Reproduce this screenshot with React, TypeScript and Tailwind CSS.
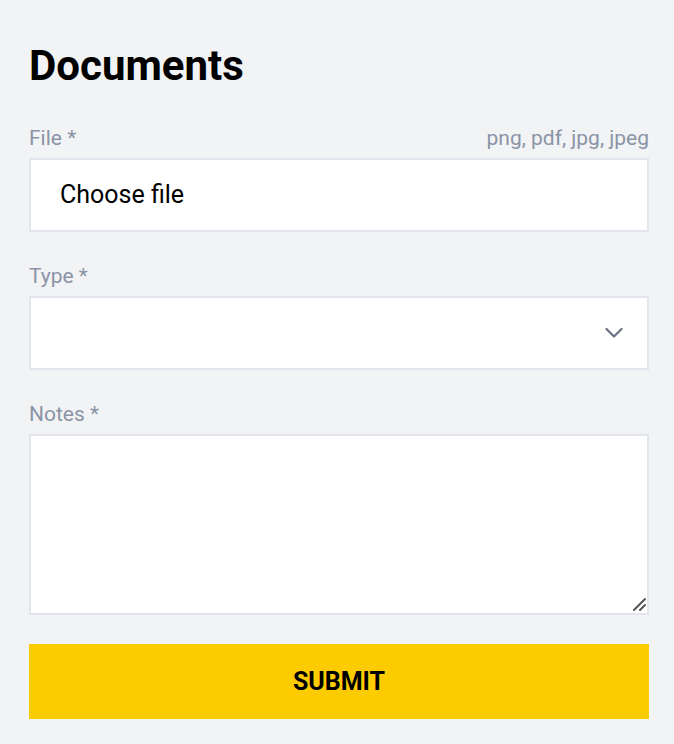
import { useState } from "react";

function Label({ text, hint }: { text: string; hint?: string }) {
  return (
    <div className="flex justify-between h-[26px] leading-[26px] text-[21px] text-[#8a94a6] mb-[7px]">
      <span>{text}</span>
      {hint && <span>{hint}</span>}
    </div>
  );
}

export default function App() {
  const [notes, setNotes] = useState("");

  return (
    <div
      className="min-h-screen bg-[#f2f3f5] pl-[29px] pr-[25px] pt-[44px] pb-[25px]"
      style={{ fontFamily: "Roboto, 'Liberation Sans', sans-serif" }}
    >
      <h1 className="text-[42px] leading-[44px] font-bold text-black mb-[37px]">
        Documents
      </h1>

      <div className="mb-[31px]">
        <Label text="File *" hint="png, pdf, jpg, jpeg" />
        <label className="flex items-center h-[74px] bg-white border-2 border-[#e2e5eb] pl-[29px] cursor-pointer">
          <span className="text-[25px] text-black">Choose file</span>
          <input type="file" className="hidden" accept=".png,.pdf,.jpg,.jpeg" />
        </label>
      </div>

      <div className="mb-[31px]">
        <Label text="Type *" />
        <div className="relative h-[74px] bg-white border-2 border-[#e2e5eb]">
          <select className="w-full h-full appearance-none bg-transparent outline-none px-[29px] text-[25px]">
            <option value=""></option>
            <option value="id">ID</option>
            <option value="invoice">Invoice</option>
          </select>
          <svg
            className="absolute right-[24px] top-1/2 -translate-y-1/2 pointer-events-none"
            width="18"
            height="11"
            viewBox="0 0 18 11"
            fill="none"
          >
            <path
              d="M1.5 1.5 9 9l7.5-7.5"
              stroke="#6b7280"
              strokeWidth="2.2"
              strokeLinecap="round"
              strokeLinejoin="round"
            />
          </svg>
        </div>
      </div>

      <div className="mb-[29px]">
        <Label text="Notes *" />
        <div className="relative">
          <textarea
            value={notes}
            onChange={(e) => setNotes(e.target.value)}
            className="block w-full h-[181px] bg-white border-2 border-[#e2e5eb] outline-none resize-none p-4 text-[22px]"
          />
          <svg
            className="absolute right-[3px] bottom-[4px] pointer-events-none"
            width="14"
            height="14"
            viewBox="0 0 14 14"
            fill="none"
          >
            <path d="M13 2 2 13M13 8l-5 5" stroke="#555" strokeWidth="2" strokeLinecap="round" />
          </svg>
        </div>
      </div>

      <button className="w-full h-[75px] bg-[#fdcc00] text-black font-bold text-[25px] uppercase">
        Submit
      </button>
    </div>
  );
}
